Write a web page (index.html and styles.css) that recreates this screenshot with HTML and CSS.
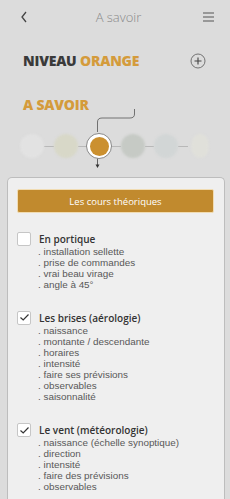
FILE: index.html
```html
<!DOCTYPE html>
<html lang="fr">
<head>
<meta charset="utf-8">
<link rel="stylesheet" href="styles.css">
</head>
<body>
<div class="screen">
  <header class="topbar">
    <svg class="back" width="8" height="12" viewBox="0 0 8 12"><path d="M6 1 L2 6 L6 11" fill="none" stroke="#444" stroke-width="1.3"/></svg>
    <div class="title">A savoir</div>
    <svg class="menu" width="11" height="10" viewBox="0 0 11 10"><path d="M0 1H11M0 5H11M0 9H11" stroke="#555" stroke-width="1.2"/></svg>
  </header>

  <div class="level">
    <div class="level-name"><span class="dark">NIVEAU</span> <span class="orange">ORANGE</span></div>
    <svg class="plus" width="16" height="16" viewBox="0 0 16 16"><circle cx="8" cy="8" r="7" fill="none" stroke="#666" stroke-width="0.9"/><path d="M8 4.5V11.5M4.5 8H11.5" stroke="#444" stroke-width="1.1"/></svg>
  </div>

  <div class="section-title">A SAVOIR</div>

  <div class="stepper">
    <svg class="connector" width="230" height="64" viewBox="0 0 230 64"><path d="M134.5 1 V6 Q134.5 10 130 10 H102 Q97.5 10 97.5 14 V24" fill="none" stroke="#555" stroke-width="0.8"/><path d="M97.5 50 V57" stroke="#444" stroke-width="0.8"/><path d="M95.5 56.5 L99.5 56.5 L97.5 60 Z" fill="#333"/></svg>
    <div class="steps">
      <span class="dot d1"></span><span class="seg"></span>
      <span class="dot d2"></span><span class="seg"></span>
      <span class="dot active"><span class="inner"></span></span><span class="seg"></span>
      <span class="dot d4"></span><span class="seg"></span>
      <span class="dot d5"></span><span class="seg"></span>
      <span class="dot d6"></span>
    </div>
  </div>

  <div class="card">
    <div class="btn">Les cours théoriques</div>

    <div class="item">
      <div class="item-head"><span class="check"></span><span class="item-title">En portique</span></div>
      <ul class="list">
        <li>. installation sellette</li>
        <li>. prise de commandes</li>
        <li>. vrai beau virage</li>
        <li>. angle à 45°</li>
      </ul>
    </div>

    <div class="item">
      <div class="item-head"><span class="check"><svg width="11" height="9" viewBox="0 0 11 9"><path d="M1.5 4.5 L4.2 7 L9.5 1.5" fill="none" stroke="#333" stroke-width="1.2"/></svg></span><span class="item-title">Les brises (aérologie)</span></div>
      <ul class="list">
        <li>. naissance</li>
        <li>. montante / descendante</li>
        <li>. horaires</li>
        <li>. intensité</li>
        <li>. faire ses prévisions</li>
        <li>. observables</li>
        <li>. saisonnalité</li>
      </ul>
    </div>

    <div class="item">
      <div class="item-head"><span class="check"><svg width="11" height="9" viewBox="0 0 11 9"><path d="M1.5 4.5 L4.2 7 L9.5 1.5" fill="none" stroke="#333" stroke-width="1.2"/></svg></span><span class="item-title">Le vent (météorologie)</span></div>
      <ul class="list">
        <li>. naissance (échelle synoptique)</li>
        <li>. direction</li>
        <li>. intensité</li>
        <li>. faire des prévisions</li>
        <li>. observables</li>
      </ul>
    </div>
  </div>
</div>
</body>
</html>
```

FILE: styles.css
```css
* { box-sizing: border-box; }
html, body { margin: 0; padding: 0; }
body {
  width: 230px;
  height: 499px;
  overflow: hidden;
  background: #dcdcdc;
  font-family: "Open Sans", "Noto Sans", sans-serif;
}
.screen { width: 230px; height: 499px; display: flex; flex-direction: column; }
.topbar {
  height: 34px;
  display: flex;
  align-items: center;
  justify-content: space-between;
  padding: 0 16px 0 20px;
}
.title {
  font-size: 13px;
  font-weight: 300;
  color: #8a8a8a;
  margin-left: 6px;
}
.level {
  margin-top: 19px;
  height: 16px;
  display: flex;
  align-items: center;
  justify-content: space-between;
  padding: 0 24px 0 23px;
}
.level-name {
  font-weight: 800;
  font-size: 14px;
  line-height: 16px;
  letter-spacing: -0.2px;
}
.dark { color: #3a3a3a; }
.orange { color: #d49b3b; }
.section-title {
  margin-top: 28px;
  padding-left: 23px;
  font-weight: 800;
  font-size: 14px;
  color: #d49b3b;
  letter-spacing: -0.2px;
  line-height: 16px;
}
.stepper {
  position: relative;
  height: 64px;
  flex: none;
}
.connector { position: absolute; left: 0; top: -5px; }
.steps {
  position: absolute;
  left: 20px;
  top: 20px;
  display: flex;
  align-items: center;
}
.dot {
  width: 24px;
  height: 24px;
  border-radius: 50%;
  flex: none;
  filter: blur(0.8px);
}
.seg { width: 9.5px; height: 1px; background: #b8b8b8; flex: none; }
.d1 { background: #e2e2e2; }
.d2 { background: #d8d8c8; }
.d4 { background: #c6cac5; }
.d5 { background: #d2d6d6; }
.d6 { background: #e0e0da; width: 18px; margin-left: 3px; }
.dot.active {
  filter: none;
  width: 26px;
  height: 26px;
  margin: 0 -1px;
  background: #fff;
  border: 1px solid #888;
  display: flex;
  align-items: center;
  justify-content: center;
  position: relative;
  z-index: 1;
}
.inner {
  width: 19px;
  height: 19px;
  border-radius: 50%;
  background: #cb902f;
}
.card {
  margin: 0 5px 0 7px;
  flex: 1;
  background: #efefef;
  border: 1px solid #bdbdbd;
  border-bottom: none;
  border-radius: 5px 5px 0 0;
  padding: 11px 10px 0 9px;
}
.btn {
  height: 24px;
  background: #c18a2e;
  border: 1px solid #f1dcb2;
  border-radius: 2px;
  color: #fff;
  font-size: 9.5px;
  display: flex;
  align-items: center;
  justify-content: center;
}
.item { margin-top: 19px; }
.item + .item { margin-top: 20.5px; }
.item-head {
  display: flex;
  align-items: center;
  height: 14px;
}
.check {
  width: 14px;
  height: 14px;
  background: #fff;
  border: 1px solid #c6c6c6;
  border-radius: 2px;
  display: flex;
  align-items: center;
  justify-content: center;
  flex: none;
}
.item-title {
  margin-left: 8px;
  font-size: 10px;
  font-weight: 600;
  color: #333;
}
.list {
  list-style: none;
  margin: 0;
  padding: 0 0 0 21px;
  font-family: "Liberation Sans", Arial, sans-serif;
  font-size: 9.9px;
  color: #585858;
  line-height: 11.1px;
}
.list li { white-space: nowrap; }
```
